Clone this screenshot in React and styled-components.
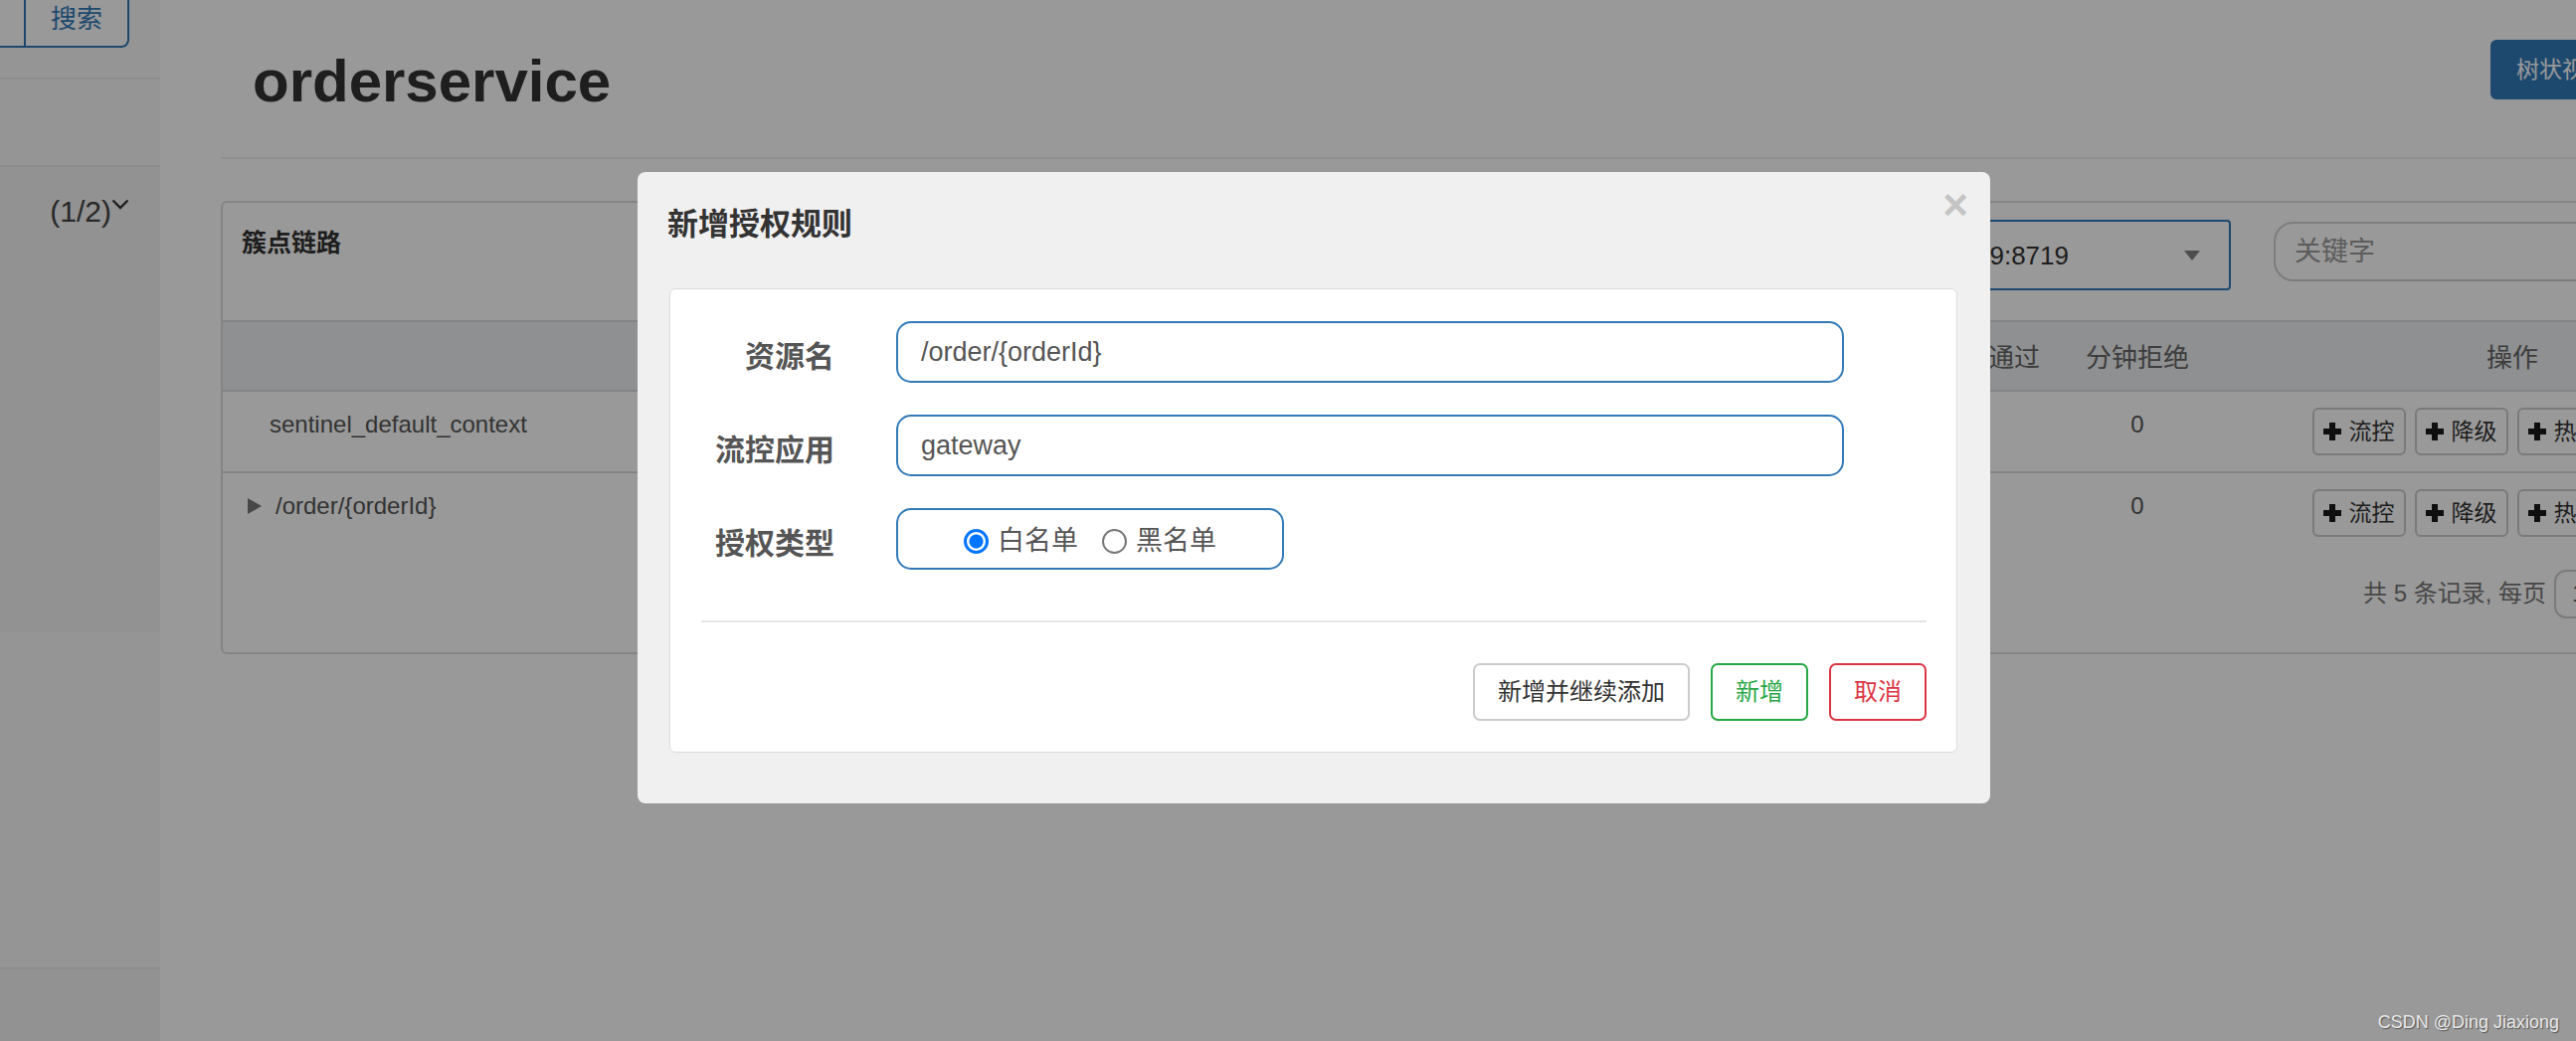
import React from "react";
import styled, { createGlobalStyle } from "styled-components";

const FONT = `"Liberation Sans", "Noto Sans CJK SC", sans-serif`;

const GlobalStyle = createGlobalStyle`
  html, body {
    margin: 0;
    padding: 0;
  }
  body {
    width: 2590px;
    height: 1047px;
    overflow: hidden;
    background: #fff;
    color: #333;
    font-family: ${FONT};
  }
  * {
    box-sizing: border-box;
  }
`;

const Page = styled.div`
  position: relative;
  display: flex;
  width: 2590px;
  height: 1047px;
  overflow: hidden;
`;

/* ---------- sidebar ---------- */

const Sidebar = styled.aside`
  flex: 0 0 161px;
  display: flex;
  flex-direction: column;
  background: #f8f8f8;
`;

const SearchRow = styled.div`
  height: 80px;
  display: flex;
  align-items: flex-start;
  border-bottom: 2px solid #ebebeb;
`;

const SearchInput = styled.div`
  width: 24px;
  height: 48px;
  background: #fff;
  border-bottom: 2px solid #337ab7;
`;

const SearchButton = styled.button`
  width: 106px;
  height: 48px;
  padding: 0 0 8px;
  border: 2px solid #337ab7;
  border-top: none;
  border-radius: 0 0 8px 0;
  background: #fff;
  color: #337ab7;
  font: 26px/1 ${FONT};
`;

const NavBlank = styled.div`
  height: 88px;
  border-bottom: 2px solid #ebebeb;
`;

const AppBlock = styled.div`
  height: 467px;
  display: flex;
  justify-content: flex-end;
  align-items: flex-start;
  padding: 27px 31px 0 0;
  background: #f3f3f3;
`;

const AppToggle = styled.span`
  font: 30px/36px ${FONT};
  color: #444;
`;

const Chevron = styled.svg`
  margin-top: 5px;
`;

const NavRest = styled.div`
  height: 340px;
  border-bottom: 2px solid #ebebeb;
`;

const NavFoot = styled.div`
  flex: 1;
  background: #f3f3f3;
`;

/* ---------- main ---------- */

const Main = styled.main`
  flex: 1;
  min-width: 0;
  padding-left: 61px;
  overflow: hidden;
`;

const Content = styled.div`
  width: 2610px;
`;

const PageHeader = styled.div`
  height: 160px;
  display: flex;
  justify-content: space-between;
  align-items: flex-start;
  padding: 0 184px 0 32px;
  border-bottom: 2px solid #eee;
`;

const Title = styled.h1`
  margin: 49px 0 0;
  font: 700 60px/66px ${FONT};
  color: #333;
`;

const TreeButton = styled.button`
  margin-top: 40px;
  height: 60px;
  padding: 0 26px;
  border: none;
  border-radius: 6px;
  background: #337ab7;
  color: #fff;
  font: 23px/1 ${FONT};
`;

const Panel = styled.section`
  margin-top: 42px;
  border: 2px solid #dcdcdc;
  border-radius: 6px;
  background: #fff;
`;

const PanelHeading = styled.div`
  height: 120px;
  display: flex;
  align-items: flex-start;
  padding: 0 204px 0 19px;
  border-bottom: 2px solid #ddd;
`;

const PanelTitle = styled.h3`
  margin: 25px 0 0;
  font: 700 25px/30px ${FONT};
  color: #333;
`;

const MachineSelect = styled.div`
  margin: 17px 0 0 auto;
  width: 380px;
  height: 71px;
  display: flex;
  justify-content: flex-end;
  align-items: center;
  gap: 116px;
  padding: 0 29px 0 16px;
  border: 2px solid #337ab7;
  border-radius: 4px;
  font: 26px/1 ${FONT};
  color: #333;
  white-space: nowrap;
`;

const Caret = styled.span`
  width: 0;
  height: 0;
  border-left: 8px solid transparent;
  border-right: 8px solid transparent;
  border-top: 10px solid #808080;
`;

const KeywordInput = styled.input`
  margin: 19px 0 0 43px;
  width: 340px;
  height: 60px;
  padding: 0 0 0 19px;
  border: 2px solid #d0d0d0;
  border-radius: 20px;
  font: 27px/1 ${FONT};
  color: #555;
  outline: none;
  &::placeholder {
    color: #999;
  }
`;

const COLUMNS = "1048px 160px 160px 160px 160px 164px 146px 1fr";

const HeadRow = styled.div`
  display: grid;
  grid-template-columns: ${COLUMNS};
  align-items: center;
  height: 70px;
  padding-top: 4px;
  background: #eef0f3;
  border-bottom: 2px solid #ddd;
  font: 26px/34px ${FONT};
  color: #666;
  text-align: center;
`;

const HeadCell = styled.div`
  padding-left: ${(p) => p.shift || 0}px;
`;

const BodyRow = styled.div`
  display: grid;
  grid-template-columns: ${COLUMNS};
  align-items: start;
  padding: 16px 0;
  border-bottom: ${(p) => (p.last ? "none" : "2px solid #ddd")};
  font: 24px/34px ${FONT};
  color: #555;
`;

const ResourceCell = styled.div`
  display: flex;
  align-items: center;
  gap: 14px;
  padding-left: ${(p) => (p.tree ? 25 : 47)}px;
`;

const TreeArrow = styled.span`
  width: 0;
  height: 0;
  border-top: 8px solid transparent;
  border-bottom: 8px solid transparent;
  border-left: 14px solid #777;
`;

const StatCell = styled.div`
  text-align: center;
`;

const OpsCell = styled.div`
  display: flex;
  justify-content: center;
  gap: 9px;
`;

const OpButton = styled.button`
  height: 48px;
  display: flex;
  align-items: center;
  gap: 7px;
  padding: 0 9px 0 8px;
  border: 2px solid #ccc;
  border-radius: 6px;
  background: #fff;
  color: #333;
  font: 23px/1 ${FONT};
  white-space: nowrap;
`;

const Pager = styled.div`
  height: 100px;
  display: flex;
  align-items: center;
  padding: 0 0 18px 2152px;
  font: 24px/1 ${FONT};
  color: #777;
  white-space: nowrap;
`;

const PageSize = styled.div`
  margin-left: 8px;
  width: 80px;
  height: 49px;
  display: flex;
  align-items: center;
  padding-left: 16px;
  border: 2px solid #ccc;
  border-radius: 12px;
  color: #555;
`;

/* ---------- modal ---------- */

const Backdrop = styled.div`
  position: absolute;
  inset: 0;
  background: rgba(0, 0, 0, 0.4);
`;

const Modal = styled.div`
  position: absolute;
  left: 641px;
  top: 173px;
  width: 1360px;
  height: 635px;
  display: flex;
  flex-direction: column;
  background: #f0f0f0;
  border-radius: 8px;
`;

const ModalHeader = styled.div`
  position: relative;
  height: 117px;
  padding: 35px 0 0 30px;
`;

const ModalTitle = styled.h4`
  margin: 0;
  font: 700 31px/36px ${FONT};
  color: #333;
`;

const CloseButton = styled.button`
  position: absolute;
  top: 12px;
  right: 22px;
  padding: 0;
  border: none;
  background: none;
  font: 700 44px/42px ${FONT};
  color: #c4c4c4;
`;

const ModalBody = styled.div`
  flex: 1;
  margin: 0 33px 51px 32px;
  padding: 32px 30px 31px 0;
  background: #fff;
  border: 1px solid #dcdcdc;
  border-radius: 6px;
`;

const FormGrid = styled.div`
  display: grid;
  grid-template-columns: 165px 953px;
  column-gap: 62px;
  row-gap: 32px;
  align-items: start;
`;

const FieldLabel = styled.label`
  padding-top: 5px;
  margin-bottom: -5px;
  text-align: right;
  font: 700 30px/62px ${FONT};
  color: #555;
`;

const FieldInput = styled.input`
  width: 100%;
  height: 62px;
  padding: 0 23px;
  border: 2px solid #337ab7;
  border-radius: 15px;
  font: 27px/1 ${FONT};
  color: #555;
  outline: none;
`;

const RadioBox = styled.div`
  width: 390px;
  height: 62px;
  display: flex;
  justify-content: center;
  align-items: center;
  gap: 24px;
  padding-top: 5px;
  border: 2px solid #337ab7;
  border-radius: 15px;
`;

const RadioOption = styled.label`
  display: flex;
  align-items: center;
  gap: 9px;
  font: 27px/1 ${FONT};
  color: #555;
`;

const Radio = styled.input`
  appearance: none;
  width: 25px;
  height: 25px;
  margin: 0;
  border: 2px solid #767676;
  border-radius: 50%;
  background: #fff;
  &:checked {
    border: 3px solid #0075ff;
    background: radial-gradient(circle, #0075ff 0 6.5px, #fff 7.5px);
  }
`;

const Divider = styled.hr`
  margin: 51px 0 0 31px;
  height: 2px;
  border: none;
  background: #e5e5e5;
`;

const Footer = styled.div`
  display: flex;
  justify-content: flex-end;
  gap: 21px;
  margin-top: 41px;
`;

const TONES = {
  default: { border: "#ccc", color: "#333" },
  success: { border: "#28a745", color: "#28a745" },
  danger: { border: "#dc3545", color: "#dc3545" },
};

const ActionButton = styled.button`
  height: 58px;
  padding: 0 23px;
  border: 2px solid ${(p) => TONES[p.tone].border};
  border-radius: 7px;
  background: #fff;
  color: ${(p) => TONES[p.tone].color};
  font: 24px/1 ${FONT};
`;

const Watermark = styled.div`
  position: absolute;
  right: 17px;
  bottom: 10px;
  font: 18px/1 ${FONT};
  color: rgba(255, 255, 255, 0.85);
  text-shadow: 1px 1px 1px rgba(0, 0, 0, 0.45);
`;

const PlusIcon = () => (
  <svg width="20" height="20" viewBox="0 0 20 20">
    <path d="M10 1v18M1 10h18" stroke="#1a1a1a" strokeWidth="6" />
  </svg>
);

const OPS = ["流控", "降级", "热点", "授权"];

const ROWS = [
  { name: "sentinel_default_context", tree: false },
  { name: "/order/{orderId}", tree: true },
];

function Ops() {
  return (
    <OpsCell>
      {OPS.map((op) => (
        <OpButton key={op}>
          <PlusIcon />
          {op}
        </OpButton>
      ))}
    </OpsCell>
  );
}

export default function App() {
  return (
    <Page>
      <GlobalStyle />
      <Sidebar>
        <SearchRow>
          <SearchInput />
          <SearchButton>搜索</SearchButton>
        </SearchRow>
        <NavBlank />
        <AppBlock>
          <AppToggle>(1/2)</AppToggle>
          <Chevron width="18" height="11" viewBox="0 0 18 11">
            <polyline points="1.5,1.5 9,9 16.5,1.5" fill="none" stroke="#333" strokeWidth="2.4" />
          </Chevron>
        </AppBlock>
        <NavRest />
        <NavFoot />
      </Sidebar>

      <Main>
        <Content>
          <PageHeader>
            <Title>orderservice</Title>
            <TreeButton>树状视图</TreeButton>
          </PageHeader>

          <Panel>
            <PanelHeading>
              <PanelTitle>簇点链路</PanelTitle>
              <MachineSelect>
                <span>192.168.137.9:8719</span>
                <Caret />
              </MachineSelect>
              <KeywordInput placeholder="关键字" readOnly />
            </PanelHeading>

            <HeadRow>
              <HeadCell>资源名</HeadCell>
              <HeadCell>通过QPS</HeadCell>
              <HeadCell>拒绝QPS</HeadCell>
              <HeadCell>并发数</HeadCell>
              <HeadCell>平均RT</HeadCell>
              <HeadCell shift={10}>分钟通过</HeadCell>
              <HeadCell>分钟拒绝</HeadCell>
              <HeadCell>操作</HeadCell>
            </HeadRow>

            {ROWS.map((row, i) => (
              <BodyRow key={row.name} last={i === ROWS.length - 1}>
                <ResourceCell tree={row.tree}>
                  {row.tree && <TreeArrow />}
                  {row.name}
                </ResourceCell>
                <StatCell>0</StatCell>
                <StatCell>0</StatCell>
                <StatCell>0</StatCell>
                <StatCell>0</StatCell>
                <StatCell>0</StatCell>
                <StatCell>0</StatCell>
                <Ops />
              </BodyRow>
            ))}

            <Pager>
              共 5 条记录, 每页
              <PageSize>10</PageSize>
            </Pager>
          </Panel>
        </Content>
      </Main>

      <Backdrop />

      <Modal>
        <ModalHeader>
          <ModalTitle>新增授权规则</ModalTitle>
          <CloseButton>×</CloseButton>
        </ModalHeader>
        <ModalBody>
          <FormGrid>
            <FieldLabel>资源名</FieldLabel>
            <FieldInput defaultValue="/order/{orderId}" />
            <FieldLabel>流控应用</FieldLabel>
            <FieldInput defaultValue="gateway" />
            <FieldLabel>授权类型</FieldLabel>
            <RadioBox>
              <RadioOption>
                <Radio type="radio" name="strategy" defaultChecked />
                白名单
              </RadioOption>
              <RadioOption>
                <Radio type="radio" name="strategy" />
                黑名单
              </RadioOption>
            </RadioBox>
          </FormGrid>
          <Divider />
          <Footer>
            <ActionButton tone="default">新增并继续添加</ActionButton>
            <ActionButton tone="success">新增</ActionButton>
            <ActionButton tone="danger">取消</ActionButton>
          </Footer>
        </ModalBody>
      </Modal>

      <Watermark>CSDN @Ding Jiaxiong</Watermark>
    </Page>
  );
}
